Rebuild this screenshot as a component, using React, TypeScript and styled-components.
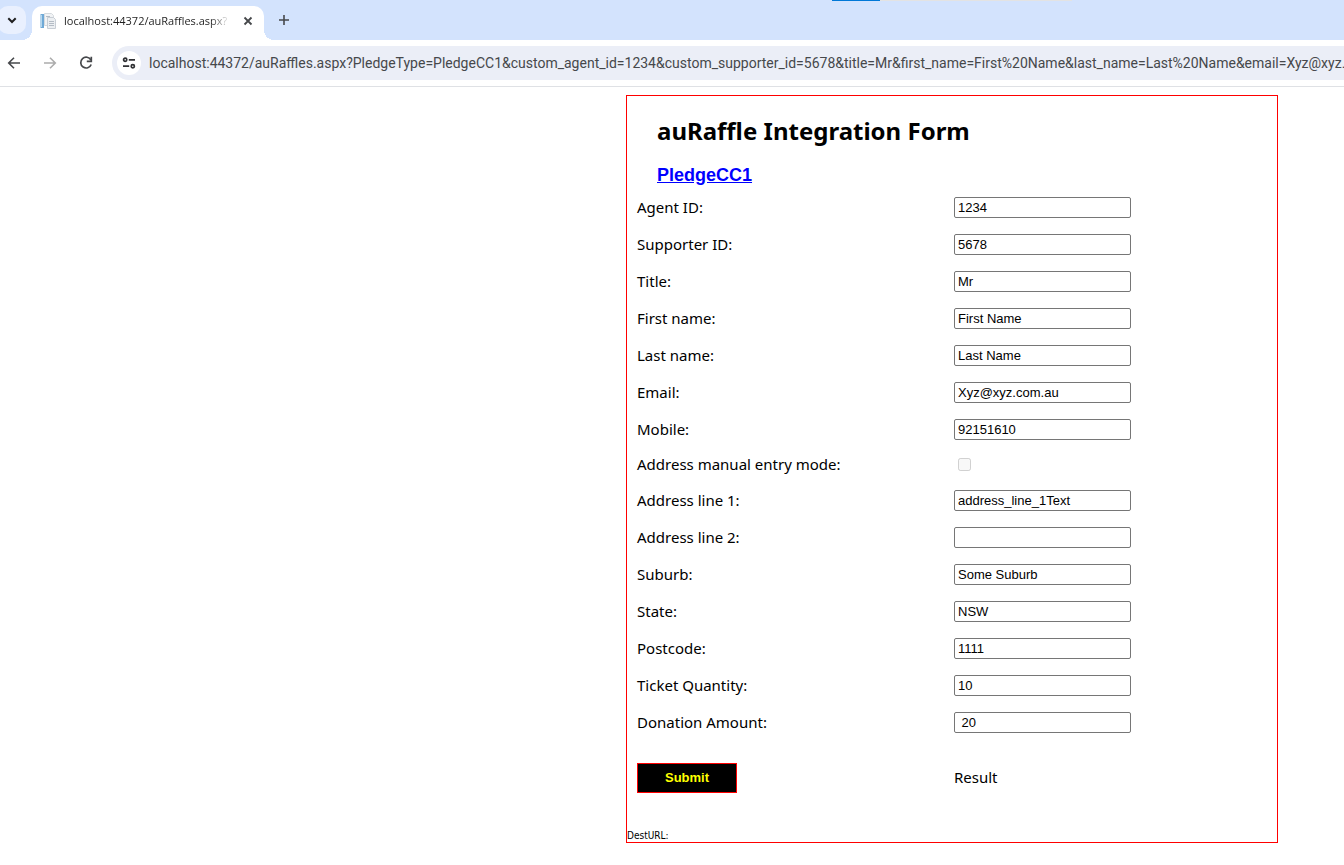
import React from "react";
import styled, { createGlobalStyle } from "styled-components";

const GlobalStyle = createGlobalStyle`
  * { box-sizing: border-box; }
  body {
    margin: 0;
    background: #fff;
    color: #000;
    font-family: "Noto Sans", Tahoma, sans-serif;
    font-size: 15px;
    overflow-x: hidden;
  }
`;

const TabStrip = styled.header`
  position: relative;
  display: flex;
  align-items: flex-end;
  height: 40px;
  background: #d3e3fd;
`;

const ProgressTrack = styled.div`
  position: absolute;
  top: 0;
  left: 832px;
  width: 240px;
  height: 1px;
  background: #e3e3e3;
`;

const ProgressValue = styled.div`
  width: 20%;
  height: 1px;
  background: #0078d7;
`;

const IconButton = styled.button<{ $size: number }>`
  display: flex;
  flex: none;
  align-items: center;
  justify-content: center;
  width: ${(p) => p.$size}px;
  height: ${(p) => p.$size}px;
  padding: 0;
  border: 0;
  border-radius: 50%;
  background: transparent;
  color: #46484b;

  &:disabled { color: #acacac; }
`;

const TabSearchButton = styled(IconButton)`
  align-self: center;
  margin-left: -2px;
  border-radius: 10px;
  background: #e9f0fe;
  color: #1f1f1f;
`;

const Tab = styled.div`
  position: relative;
  display: flex;
  align-items: center;
  width: 232px;
  height: 34px;
  margin-left: 6px;
  padding: 0 6px 4px 8px;
  border-radius: 10px 10px 0 0;
  background: #fff;

  &::before,
  &::after {
    content: "";
    position: absolute;
    bottom: 0;
    width: 10px;
    height: 10px;
  }
  &::before {
    left: -10px;
    background: radial-gradient(circle at 0 0, transparent 10px, #fff 10px);
  }
  &::after {
    right: -10px;
    background: radial-gradient(circle at 100% 0, transparent 10px, #fff 10px);
  }
`;

const TabTitle = styled.span`
  flex: 1;
  min-width: 0;
  margin-left: 8px;
  margin-right: 8px;
  white-space: nowrap;
  font-family: "Open Sans", "Segoe UI", sans-serif;
  font-size: 11px;
  line-height: 16px;
  color: #1f1f1f;
  mask-image: linear-gradient(to right, #000 88%, transparent);
`;

const NewTabButton = styled(IconButton)`
  align-self: center;
  margin-left: 6px;
`;

const Toolbar = styled.nav`
  display: flex;
  align-items: center;
  height: 47px;
  border-bottom: 1px solid #dfe1e5;
  overflow: hidden;
`;

const NavButtons = styled.div`
  display: flex;
  gap: 8px;
  padding-right: 12px;
`;

const AddressBar = styled.div`
  display: flex;
  flex: 1;
  align-items: center;
  height: 34px;
  padding-left: 5px;
  border-radius: 17px 0 0 17px;
  background: #ebeef7;
`;

const SiteInfoButton = styled(IconButton)`
  background: #fff;
  color: #303134;
`;

const AddressInput = styled.input`
  flex: 1;
  min-width: 0;
  margin-left: 8px;
  padding: 0;
  border: 0;
  outline: 0;
  background: transparent;
  font-family: Roboto, "Segoe UI", sans-serif;
  font-size: 14px;
  line-height: 20px;
  color: #46484b;
`;

const Page = styled.main`
  display: flex;
  justify-content: flex-end;
  padding: 8px 66px 22px 16px;
`;

const Panel = styled.form`
  width: 652px;
  border: 1px solid #f00;
`;

const Heading = styled.h1`
  margin: 0;
  padding: 19px 30px 0;
  font-size: 24px;
  line-height: 32px;
  font-weight: 700;
`;

const PledgeHeading = styled.h2`
  margin: 0;
  padding: 18px 30px 4px;
  font-family: "Liberation Sans", Arial, sans-serif;
  font-size: 18px;
  line-height: 20px;
  font-weight: 700;

  a { color: #00f; }
`;

const Row = styled.div<{ $height: number }>`
  display: grid;
  grid-template-columns: 1fr 1fr;
  align-items: center;
  min-height: ${(p) => p.$height}px;
  padding: 0 6px 0 10px;
`;

const Label = styled.label`
  padding-bottom: 2px;
  line-height: 20px;
`;

const TextInput = styled.input`
  width: 177px;
  height: 21px;
  padding: 1px 3px;
  border: 1px solid #767676;
  border-radius: 2px;
  background: #fff;
  font-family: "Liberation Sans", Arial, sans-serif;
  font-size: 13px;
  color: #000;
`;

const Checkbox = styled.input`
  width: 13px;
  height: 13px;
  margin: 0 0 2px 4px;
`;

const SubmitButton = styled.button`
  width: 100px;
  height: 30px;
  padding: 0 0 2px;
  border: 1px solid #f00;
  background: #000;
  color: #ff0;
  font-family: "Liberation Sans", Arial, sans-serif;
  font-size: 13px;
  font-weight: 700;
`;

const Result = styled.output`
  padding-bottom: 2px;
  line-height: 20px;
`;

const DestUrl = styled.p`
  margin: 0;
  padding-top: 14px;
  font-family: "DejaVu Sans Condensed", "DejaVu Sans", Tahoma, sans-serif;
  font-size: 10px;
  line-height: 13px;
`;

const URL_TEXT =
  "localhost:44372/auRaffles.aspx?PledgeType=PledgeCC1&custom_agent_id=1234&custom_supporter_id=5678&title=Mr&first_name=First%20Name&last_name=Last%20Name&email=Xyz@xyz.com.au&mobile=92151610";

type Field = { id: string; label: string; value?: string; checkbox?: boolean };

const FIELDS: Field[] = [
  { id: "agent", label: "Agent ID:", value: "1234" },
  { id: "supporter", label: "Supporter ID:", value: "5678" },
  { id: "title", label: "Title:", value: "Mr" },
  { id: "first", label: "First name:", value: "First Name" },
  { id: "last", label: "Last name:", value: "Last Name" },
  { id: "email", label: "Email:", value: "Xyz@xyz.com.au" },
  { id: "mobile", label: "Mobile:", value: "92151610" },
  { id: "manual", label: "Address manual entry mode:", checkbox: true },
  { id: "address1", label: "Address line 1:", value: "address_line_1Text" },
  { id: "address2", label: "Address line 2:", value: "" },
  { id: "suburb", label: "Suburb:", value: "Some Suburb" },
  { id: "state", label: "State:", value: "NSW" },
  { id: "postcode", label: "Postcode:", value: "1111" },
  { id: "quantity", label: "Ticket Quantity:", value: "10" },
  { id: "donation", label: "Donation Amount:", value: " 20" },
];

const Stroke = ({ d, width = 2 }: { d: string; width?: number }) => (
  <svg width="16" height="16" viewBox="0 0 16 16" fill="none" stroke="currentColor" strokeWidth={width}>
    <path d={d} />
  </svg>
);

const Favicon = () => (
  <svg width="16" height="16" viewBox="0 0 16 16">
    <path d="M0.500 1H4v14H0.500z" fill="#6fa9d6" />
    <path d="M1 2h1v12H1z" fill="#b5d8ef" />
    <path d="M4.500 0.500h7l2 2v10h-9z" fill="#f1f3f5" stroke="#d5dade" />
    <path d="M7.500 4.500h6l2 2v9h-8z" fill="#eceff2" stroke="#c8ced5" />
    <path d="M9 8.500h5M9 10.500h5M9 12.500h5M6 3.500h4" stroke="#b4bcc5" />
  </svg>
);

const Reload = () => (
  <svg width="16" height="16" viewBox="0 0 16 16" fill="none" stroke="currentColor" strokeWidth="1.700">
    <path d="M12.900 5A5.400 5.400 0 1 0 13.200 9.500" />
    <path d="M13.300 1.800v4.500H8.800" />
  </svg>
);

const SiteSettings = () => (
  <svg width="16" height="16" viewBox="0 0 16 16" fill="none" stroke="currentColor" strokeWidth="1.700">
    <circle cx="4.200" cy="4.800" r="1.600" />
    <path d="M7.800 4.800H14M2 11.200h6.200" />
    <circle cx="11.800" cy="11.200" r="1.600" />
  </svg>
);

export default function App() {
  return (
    <>
      <GlobalStyle />
      <TabStrip>
        <ProgressTrack>
          <ProgressValue />
        </ProgressTrack>
        <TabSearchButton $size={28} aria-label="Search tabs">
          <Stroke d="M4.300 6.300L8 10l3.700-3.700" />
        </TabSearchButton>
        <Tab>
          <Favicon />
          <TabTitle>localhost:44372/auRaffles.aspx?</TabTitle>
          <IconButton $size={20} aria-label="Close tab">
            <Stroke d="M4.500 4.500l7 7M11.500 4.500l-7 7" width={1.8} />
          </IconButton>
        </Tab>
        <NewTabButton $size={28} aria-label="New tab">
          <Stroke d="M8 3v10M3 8h10" width={1.6} />
        </NewTabButton>
      </TabStrip>
      <Toolbar>
        <NavButtons>
          <IconButton $size={28} aria-label="Back">
            <Stroke d="M14 8H3M8 2.700L2.700 8 8 13.300" width={1.6} />
          </IconButton>
          <IconButton $size={28} aria-label="Forward" disabled>
            <Stroke d="M2 8h11M8 2.700L13.300 8 8 13.300" width={1.6} />
          </IconButton>
          <IconButton $size={28} aria-label="Reload">
            <Reload />
          </IconButton>
        </NavButtons>
        <AddressBar>
          <SiteInfoButton $size={24} aria-label="View site information">
            <SiteSettings />
          </SiteInfoButton>
          <AddressInput aria-label="Address" defaultValue={URL_TEXT} />
        </AddressBar>
      </Toolbar>
      <Page>
        <Panel onSubmit={(e) => e.preventDefault()}>
          <Heading>auRaffle Integration Form</Heading>
          <PledgeHeading>
            <a href="#pledge">PledgeCC1</a>
          </PledgeHeading>
          {FIELDS.map((f) => (
            <Row key={f.id} $height={f.checkbox ? 34 : 37}>
              <Label htmlFor={f.id}>{f.label}</Label>
              {f.checkbox ? (
                <Checkbox id={f.id} type="checkbox" disabled />
              ) : (
                <TextInput id={f.id} type="text" defaultValue={f.value} />
              )}
            </Row>
          ))}
          <Row $height={74}>
            <SubmitButton type="submit">Submit</SubmitButton>
            <Result>Result</Result>
          </Row>
          <DestUrl>DestURL:</DestUrl>
        </Panel>
      </Page>
    </>
  );
}
